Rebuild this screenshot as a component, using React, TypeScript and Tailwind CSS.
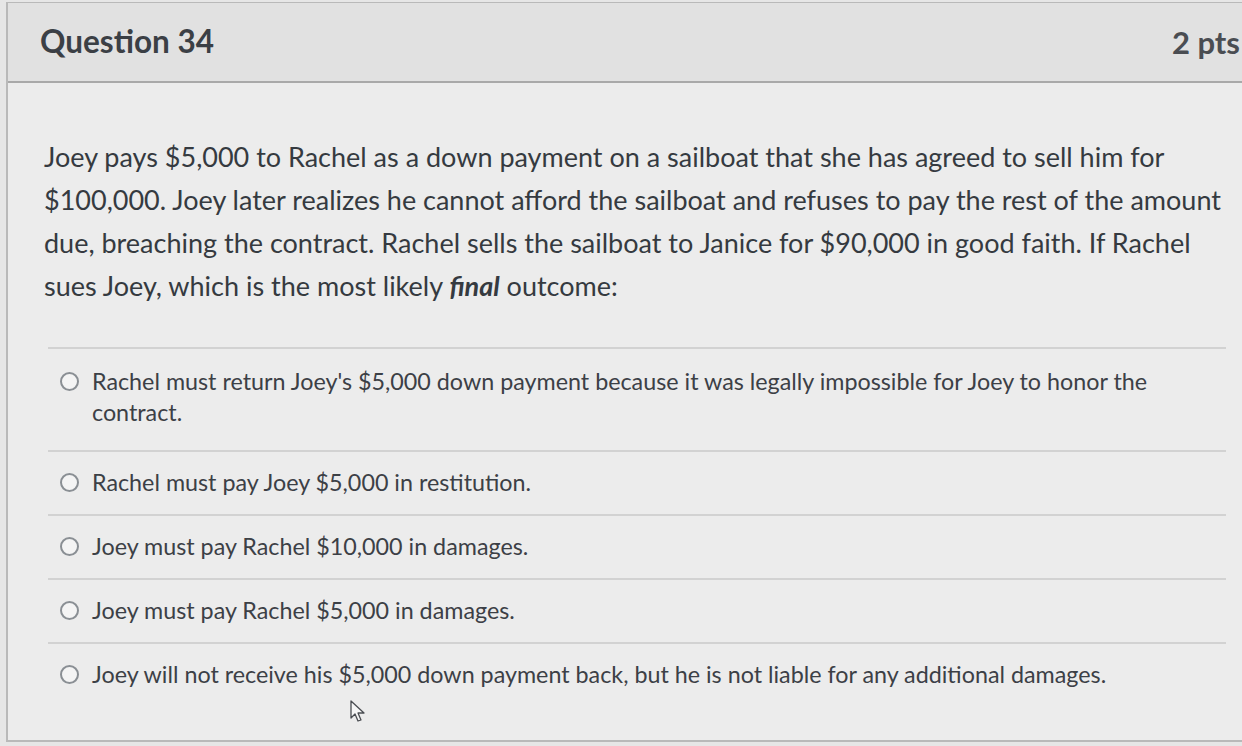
import React from "react";

const answers: React.ReactNode[] = [
  <>
    Rachel must return Joey's $5,000 down payment because it was legally impossible for Joey to honor the
    <br />
    contract.
  </>,
  "Rachel must pay Joey $5,000 in restitution.",
  "Joey must pay Rachel $10,000 in damages.",
  "Joey must pay Rachel $5,000 in damages.",
  "Joey will not receive his $5,000 down payment back, but he is not liable for any additional damages.",
];

function Radio() {
  return (
    <span className="mt-[6px] h-[19px] w-[19px] shrink-0 rounded-full border-2 border-[#8a8f94] bg-[#f4f4f4]" />
  );
}

export default function App() {
  return (
    <div className="relative h-[746px] w-[1242px] overflow-hidden bg-[#e6e6e6] pl-[6px] pt-[2px] font-['Lato','Noto_Sans',sans-serif]">
      <div className="flex h-[740px] w-[1260px] flex-col border-b-2 border-l-2 border-t border-[#b9b9b9] bg-[#ececec]">
        {/* header */}
        <div className="flex h-[80px] items-center justify-between border-b-2 border-[#a9a9a9] bg-[#e1e1e1] pl-[32px] pr-[26px]">
          <h2 className="text-[31.5px] font-bold text-[#3b3f45]">Question 34</h2>
          <span className="text-[31px] font-bold text-[#4a4d52]">2 pts</span>
        </div>

        {/* body */}
        <div className="px-[36px] pt-[52px]">
          <p className="whitespace-nowrap text-[27px] leading-[43px] text-[#353a40]">
            Joey pays $5,000 to Rachel as a down payment on a sailboat that she has agreed to sell him for
            <br />
            $100,000. Joey later realizes he cannot afford the sailboat and refuses to pay the rest of the amount
            <br />
            due, breaching the contract. Rachel sells the sailboat to Janice for $90,000 in good faith. If Rachel
            <br />
            sues Joey, which is the most likely <b className="font-bold italic">final</b> outcome:
          </p>
        </div>

        <div className="ml-[40px] mt-[40px] w-[1178px]">
          {answers.map((a, i) => (
            <div
              key={i}
              className={
                i === 0
                  ? "flex gap-[13px] border-t-2 border-[#d2d2d2] pb-[22px] pl-[12px] pt-[17px]"
                  : "flex gap-[13px] border-t-2 border-[#d2d2d2] pb-[16px] pl-[12px] pt-[15px]"
              }
            >
              <Radio />
              <span className="whitespace-nowrap text-[23.3px] leading-[31px] text-[#3c4046]">{a}</span>
            </div>
          ))}
        </div>
      </div>

      {/* mouse pointer */}
      <svg
        className="absolute left-[350px] top-[700px]"
        width="16"
        height="24"
        viewBox="0 0 16 24"
      >
        <path
          d="M1 1 L1 18 L5 14 L8 21 L11 20 L8 13 L14 13 Z"
          fill="#f6f6f6"
          stroke="#4a4d52"
          strokeWidth="1.3"
          strokeLinejoin="round"
        />
      </svg>
    </div>
  );
}
